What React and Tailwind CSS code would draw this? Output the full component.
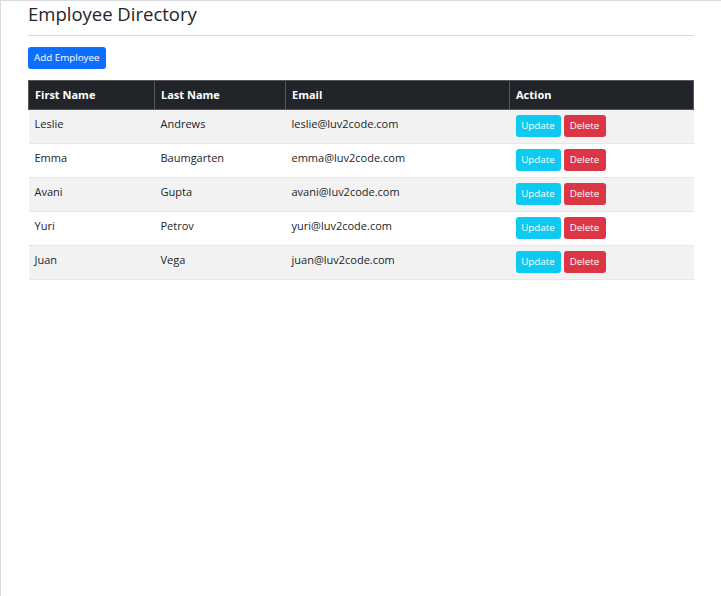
import React from 'react';

const employees = [
  { first: 'Leslie', last: 'Andrews', email: 'leslie@luv2code.com' },
  { first: 'Emma', last: 'Baumgarten', email: 'emma@luv2code.com' },
  { first: 'Avani', last: 'Gupta', email: 'avani@luv2code.com' },
  { first: 'Yuri', last: 'Petrov', email: 'yuri@luv2code.com' },
  { first: 'Juan', last: 'Vega', email: 'juan@luv2code.com' },
];

const App = () => {
  return (
    <div className="min-h-[596px] border-l border-t border-[#dadce0] bg-white text-[#212529] font-['Segoe_UI','Open_Sans',sans-serif]">
      <div className="px-[27px]">
        <h2 className="h-[34px] text-[18.5px] leading-[26px] font-normal">Employee Directory</h2>
        <hr className="border-t border-[#d9dadb]" />

        <button className="mt-[11px] h-[22px] px-[6px] rounded-[3px] bg-[#0d6efd] text-white text-[9.8px] leading-none">
          Add Employee
        </button>

        {/* employee table */}
        <table className="mt-[11px] w-full border-collapse text-[11px] leading-[16.8px]">
          <thead>
            <tr className="bg-[#212529] text-white">
              <th className="w-[126px] h-[29px] px-[6px] text-left font-bold border border-[#55595c]">First Name</th>
              <th className="w-[131px] px-[6px] text-left font-bold border border-[#55595c]">Last Name</th>
              <th className="w-[224px] px-[6px] text-left font-bold border border-[#55595c]">Email</th>
              <th className="px-[6px] text-left font-bold border border-[#55595c]">Action</th>
            </tr>
          </thead>
          <tbody>
            {employees.map((e, i) => (
              <tr key={e.email} className={`border-b border-[#e6e6e6] ${i % 2 === 0 ? 'bg-[#f2f2f2]' : 'bg-white'}`}>
                <td className="h-[34px] px-[6px] pb-[4px]">{e.first}</td>
                <td className="px-[6px] pb-[4px]">{e.last}</td>
                <td className="px-[6px] pb-[4px]">{e.email}</td>
                <td className="px-[6px]">
                  <div className="flex gap-[3px] pb-[1px]">
                    <button className="h-[22px] w-[45px] rounded-[3px] bg-[#0dcaf0] text-white text-[9.8px]">Update</button>
                    <button className="h-[22px] w-[42px] rounded-[3px] bg-[#dc3545] text-white text-[9.8px]">Delete</button>
                  </div>
                </td>
              </tr>
            ))}
          </tbody>
        </table>
      </div>
    </div>
  );
};

export default App;
